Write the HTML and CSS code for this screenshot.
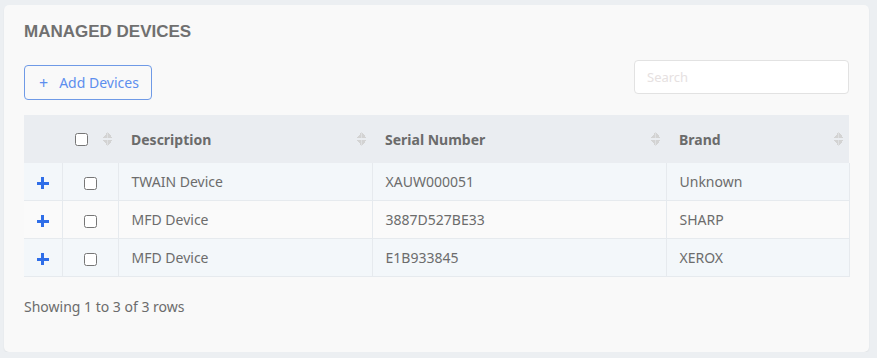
FILE: index.html
```html
<!DOCTYPE html>
<html lang="en">
<head>
  <meta charset="UTF-8" />
  <meta name="viewport" content="width=device-width, initial-scale=1.0" />
  <title>Managed Devices</title>
  <link rel="stylesheet" href="styles.css">
</head>
<body>
  <div class="card">
    <h2 class="card-title">MANAGED DEVICES</h2>
    <div class="toolbar">
      <button class="btn-add"><span class="btn-plus">+</span>Add Devices</button>
      <input class="search" type="text" placeholder="Search">
    </div>
    <table class="devices">
      <colgroup>
        <col style="width:38px">
        <col style="width:56px">
        <col style="width:254px">
        <col style="width:294px">
        <col style="width:183px">
      </colgroup>
      <thead>
        <tr>
          <th></th>
          <th><div class="th-inner th-check"><input type="checkbox"><span class="sort"></span></div></th>
          <th><div class="th-inner">Description<span class="sort"></span></div></th>
          <th><div class="th-inner">Serial Number<span class="sort"></span></div></th>
          <th><div class="th-inner">Brand<span class="sort"></span></div></th>
        </tr>
      </thead>
      <tbody>
        <tr>
          <td class="cell-expand"><span class="expand"></span></td>
          <td class="cell-check"><input type="checkbox"></td>
          <td>TWAIN Device</td>
          <td>XAUW000051</td>
          <td>Unknown</td>
        </tr>
        <tr>
          <td class="cell-expand"><span class="expand"></span></td>
          <td class="cell-check"><input type="checkbox"></td>
          <td>MFD Device</td>
          <td>3887D527BE33</td>
          <td>SHARP</td>
        </tr>
        <tr>
          <td class="cell-expand"><span class="expand"></span></td>
          <td class="cell-check"><input type="checkbox"></td>
          <td>MFD Device</td>
          <td>E1B933845</td>
          <td>XEROX</td>
        </tr>
      </tbody>
    </table>
    <div class="pagination-info">Showing 1 to 3 of 3 rows</div>
  </div>
</body>
</html>
```

FILE: styles.css
```css
body {
  margin: 0;
  padding: 0;
  background: #eceff2;
  font-family: 'Noto Sans', 'Open Sans', Arial, sans-serif;
  color: #6c6c6c;
}
.card {
  box-sizing: border-box;
  width: 865px;
  height: 347px;
  margin: 5px 0 0 4px;
  padding: 16px 20px 0 20px;
  background: #f9f9f9;
  border-radius: 5px;
  box-shadow: 0 1px 2px rgba(0,0,0,0.06);
}
.card-title {
  margin: 0;
  font-family: 'Liberation Sans', Arial, sans-serif;
  font-size: 17px;
  font-weight: 700;
  line-height: 22px;
  color: #707070;
}
.toolbar {
  display: flex;
  justify-content: space-between;
  align-items: flex-start;
  margin-top: 17px;
  height: 55px;
}
.btn-add {
  box-sizing: border-box;
  height: 35px;
  width: 128px;
  margin-top: 5px;
  padding: 0 0 0 14px;
  display: flex;
  align-items: center;
  background: transparent;
  border: 1px solid #6f9ae6;
  border-radius: 4px;
  color: #5d8eee;
  font-family: 'Noto Sans', 'Open Sans', Arial, sans-serif;
  font-size: 14px;
}
.btn-plus {
  font-size: 16px;
  margin-right: 11px;
}
.search {
  box-sizing: border-box;
  width: 215px;
  height: 34px;
  padding: 0 12px;
  background: #fff;
  border: 1px solid #e2e2e2;
  border-radius: 4px;
  font-family: 'Noto Sans', 'Open Sans', Arial, sans-serif;
  font-size: 13px;
  outline: none;
}
.search::placeholder {
  color: #e6e1e1;
}
.devices {
  width: 825px;
  border-collapse: collapse;
  table-layout: fixed;
  font-size: 14px;
}
.devices thead th {
  height: 48px;
  padding: 0;
  background: #eaedf1;
  text-align: left;
  font-weight: 700;
  color: #6b6b6b;
}
.th-inner {
  display: flex;
  align-items: center;
  justify-content: space-between;
  padding: 0 6px 0 13px;
}
.th-check {
  padding-left: 13px;
}
.sort {
  width: 9px;
  height: 14px;
  background:
    linear-gradient(to bottom right, transparent 50%, #d3d3d3 50%) 0 0 / 4.5px 6px no-repeat,
    linear-gradient(to bottom left, transparent 50%, #d3d3d3 50%) 4.5px 0 / 4.5px 6px no-repeat,
    linear-gradient(to top right, transparent 50%, #d3d3d3 50%) 0 8px / 4.5px 6px no-repeat,
    linear-gradient(to top left, transparent 50%, #d3d3d3 50%) 4.5px 8px / 4.5px 6px no-repeat;
}
.devices tbody td {
  height: 37px;
  padding: 0 13px;
  border: 1px solid #e6eaee;
  border-top: 0;
}
.devices tbody td:first-child {
  border-left: 0;
}
.devices tbody tr:nth-child(odd) td {
  background: #f3f7fa;
}
.devices tbody tr:nth-child(even) td {
  background: #fafafa;
}
.devices tbody td.cell-expand,
.devices tbody td.cell-check {
  padding: 0;
  text-align: center;
}
.expand {
  display: inline-block;
  width: 12px;
  height: 12px;
  vertical-align: middle;
  background:
    linear-gradient(#2f6ee8, #2f6ee8) center / 12px 3px no-repeat,
    linear-gradient(#2f6ee8, #2f6ee8) center / 3px 12px no-repeat;
}
.cell-check input {
  margin: 0;
  vertical-align: middle;
}
.th-check input {
  margin: 0;
}
.pagination-info {
  margin-top: 20px;
  font-size: 14px;
  color: #6c6c6c;
}
```
